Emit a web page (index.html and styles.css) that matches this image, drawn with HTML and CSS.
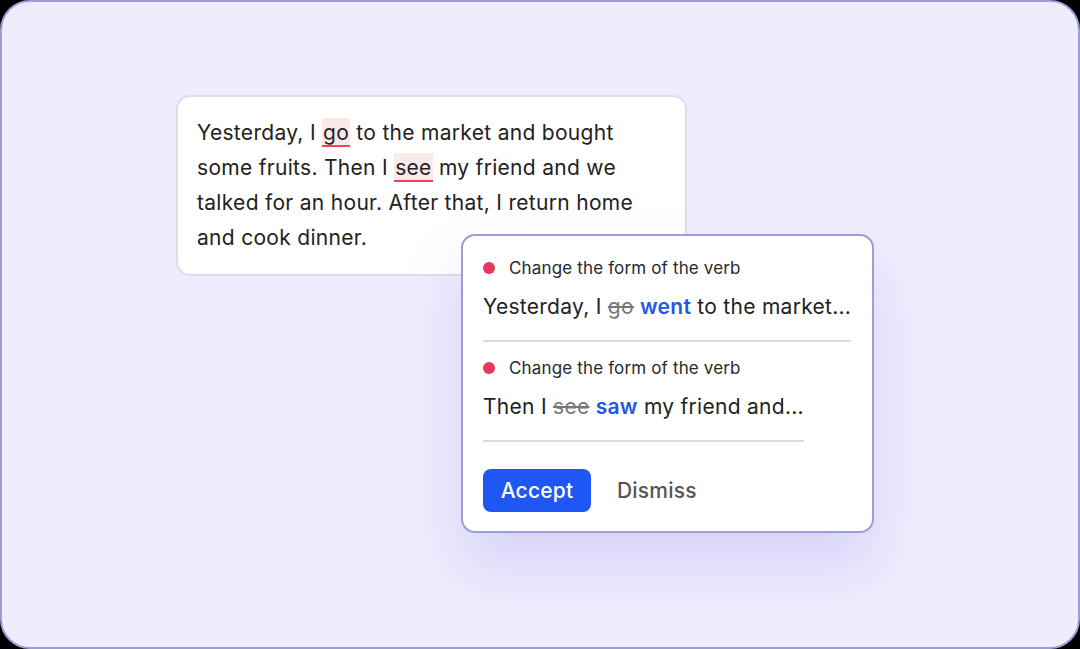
FILE: index.html
```html
<!DOCTYPE html>
<html lang="en">
<head>
<meta charset="utf-8">
<title>Grammar suggestions</title>
<link rel="stylesheet" href="styles.css">
</head>
<body>
<div class="frame">
  <div class="card">
    <p class="passage">Yesterday, I <span class="err">go</span> to the market and bought<br>some fruits. Then I <span class="err">see</span> my friend and we<br>talked for an hour. After that, I return home<br>and cook dinner.</p>
  </div>
  <div class="popup">
    <div class="item">
      <div class="label"><span class="dot"></span>Change the form of the verb</div>
      <div class="sentence">Yesterday, I <s class="old">go</s> <b class="new">went</b> to the market...</div>
    </div>
    <div class="item">
      <div class="label"><span class="dot"></span>Change the form of the verb</div>
      <div class="sentence">Then I <s class="old">see</s> <b class="new">saw</b> my friend and...</div>
    </div>
    <div class="actions">
      <button class="btn-accept">Accept</button>
      <button class="btn-dismiss">Dismiss</button>
    </div>
  </div>
</div>
</body>
</html>
```

FILE: styles.css
```css
html, body {
  margin: 0;
  padding: 0;
  background: #000;
}
body {
  width: 1080px;
  height: 649px;
  overflow: hidden;
  font-family: Inter, "Noto Sans", sans-serif;
  color: #222;
}
.frame {
  position: relative;
  box-sizing: border-box;
  width: 1080px;
  height: 649px;
  background: #efedfd;
  border: 2px solid #9d9dd6;
  border-radius: 30px;
  padding: 93px 0 0 174px;
}
.card {
  box-sizing: border-box;
  width: 511px;
  background: #fff;
  border: 2px solid #dfdcee;
  border-radius: 14px;
  padding: 18px 20px 19px 19px;
}
.passage {
  margin: 0;
  font-size: 21px;
  line-height: 35px;
  letter-spacing: 0.3px;
}
.err {
  background: #fde8ea;
  box-shadow: inset 0 -2px 0 #e8455f;
  padding: 2px 1px 2px;
}
.popup {
  position: absolute;
  left: 459px;
  top: 232px;
  box-sizing: border-box;
  width: 413px;
  background: #fff;
  border: 2px solid #9d9dd8;
  border-radius: 14px;
  padding: 20px 20px 19px 20px;
  box-shadow: 0 34px 60px rgba(130, 120, 235, 0.22);
}
.item {
  width: fit-content;
  padding-bottom: 18px;
  border-bottom: 2px solid #dcdcdc;
}
.item + .item {
  padding-top: 14px;
}
.label {
  display: flex;
  align-items: center;
  font-size: 17px;
  line-height: 24px;
  letter-spacing: 0.15px;
  color: #2a2a2a;
}
.dot {
  width: 12px;
  height: 12px;
  border-radius: 50%;
  background: #e8375a;
  margin-right: 14px;
}
.sentence {
  margin-top: 12px;
  font-size: 21px;
  line-height: 30px;
  white-space: nowrap;
  letter-spacing: 0.28px;
}
.old {
  color: #777;
  text-decoration: line-through;
}
.new {
  color: #2457e6;
  font-weight: 600;
}
.actions {
  display: flex;
  align-items: center;
  gap: 26px;
  margin-top: 27px;
}
.btn-accept {
  width: 108px;
  height: 43px;
  border: none;
  border-radius: 8px;
  background: #1f57f5;
  color: #fff;
  font-family: inherit;
  font-size: 21px;
  font-weight: 500;
  letter-spacing: 0.2px;
  padding: 0;
}
.btn-dismiss {
  border: none;
  background: none;
  padding: 0;
  color: #555;
  font-family: inherit;
  font-size: 21px;
  font-weight: 500;
  letter-spacing: 0.2px;
}
```
